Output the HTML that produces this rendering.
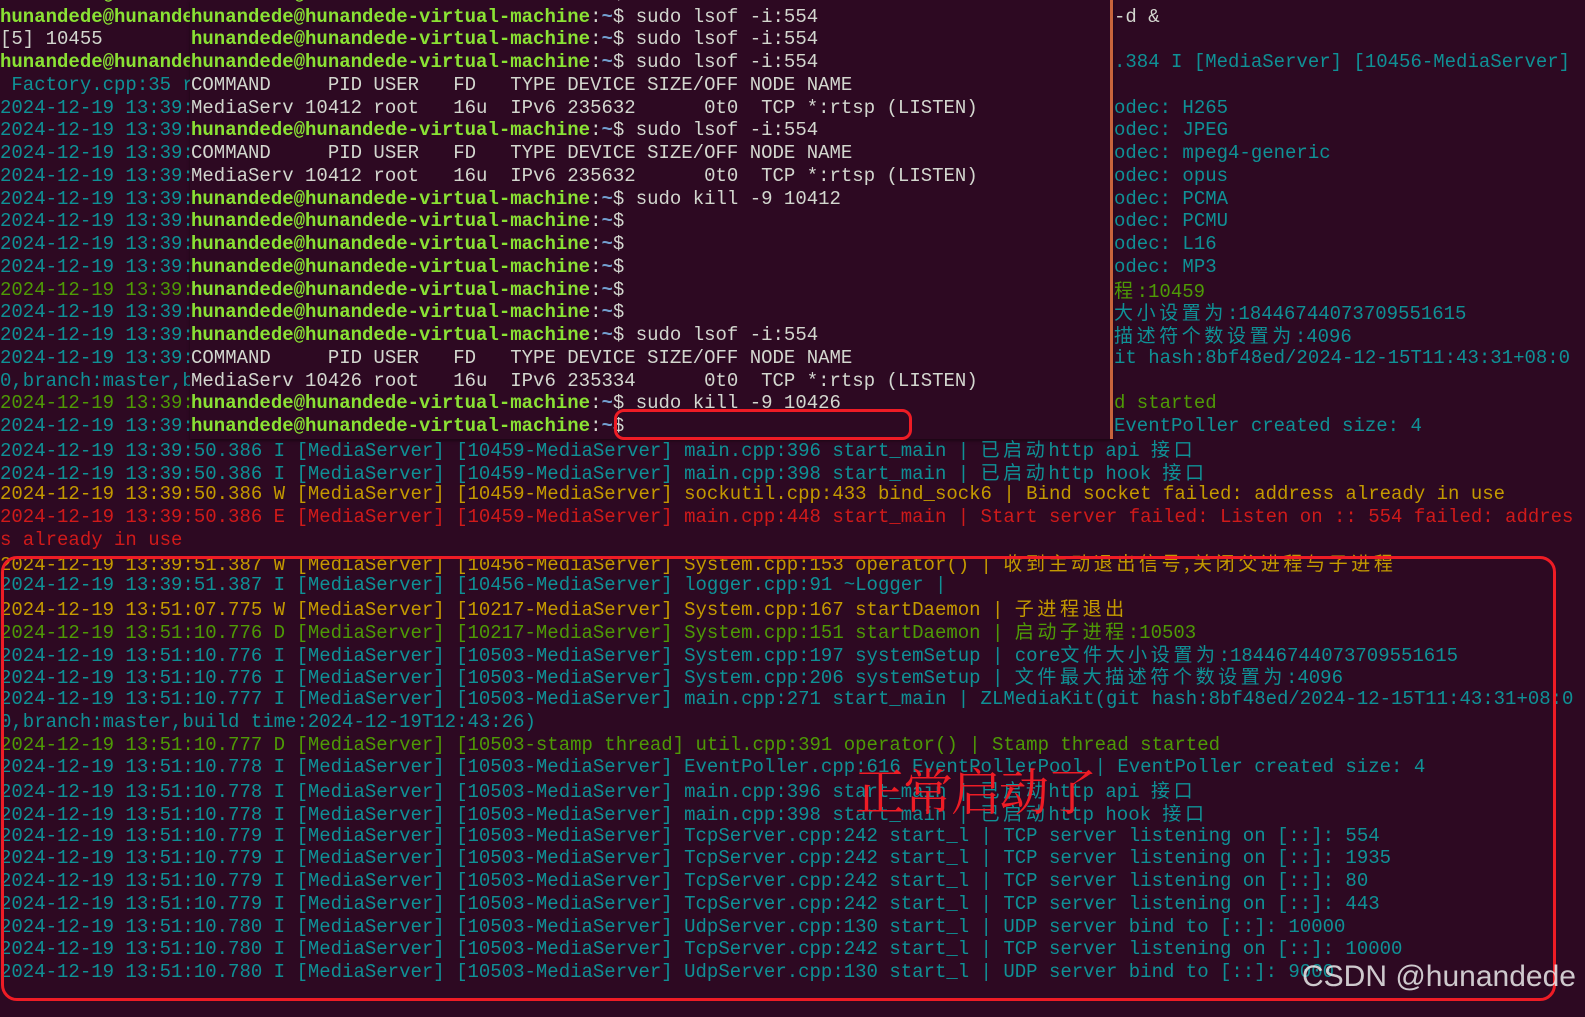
<!DOCTYPE html>
<html><head><meta charset="utf-8">
<style>
html,body{margin:0;padding:0;}
body{width:1585px;height:1017px;overflow:hidden;background:#2d0922;position:relative;font-family:"Liberation Mono","Noto Sans CJK SC",monospace;font-size:19px;}
.r{position:absolute;left:0;height:22.75px;line-height:22.75px;white-space:pre;}
.c{color:#0f9196}.g{color:#8ae234;font-weight:bold}.w{color:#d3d7cf}.y{color:#c49a00}.e{color:#d01a1a}.o{color:#4e9a06}.b{color:#729fcf;font-weight:bold}
.k{letter-spacing:3.6px;font-family:"Noto Sans CJK SC",sans-serif}
#ov{position:absolute;left:190px;top:0;width:920px;height:439px;background:#2d0922;border-right:3px solid #c8643c;box-shadow:0 2px 3px rgba(0,0,0,.4);overflow:hidden}
#ov .r{left:1px}
</style></head><body>
<div class="r g" style="top:-17px">hunandede@hunande</div>
<div class="r g" style="top:5.6px">hunandede@hunande</div>
<div class="r w" style="top:28.35px">[5] 10455</div>
<div class="r g" style="top:51.1px">hunandede@hunande</div>
<div class="r c" style="top:73.85px"> Factory.cpp:35 r</div>
<div class="r c" style="top:96.6px">2024-12-19 13:39:</div>
<div class="r c" style="top:119.35px">2024-12-19 13:39:</div>
<div class="r c" style="top:142.1px">2024-12-19 13:39:</div>
<div class="r c" style="top:164.85px">2024-12-19 13:39:</div>
<div class="r c" style="top:187.6px">2024-12-19 13:39:</div>
<div class="r c" style="top:210.35px">2024-12-19 13:39:</div>
<div class="r c" style="top:233.1px">2024-12-19 13:39:</div>
<div class="r c" style="top:255.85px">2024-12-19 13:39:</div>
<div class="r o" style="top:278.6px">2024-12-19 13:39:</div>
<div class="r c" style="top:301.35px">2024-12-19 13:39:</div>
<div class="r c" style="top:324.1px">2024-12-19 13:39:</div>
<div class="r c" style="top:346.85px">2024-12-19 13:39:</div>
<div class="r c" style="top:369.6px">0,branch:master,b</div>
<div class="r o" style="top:392.35px">2024-12-19 13:39:</div>
<div class="r c" style="top:415.1px">2024-12-19 13:39:</div>
<div class="r w" style="top:5.6px;left:1114px">-d &amp;</div>
<div class="r c" style="top:51.1px;left:1114px">.384 I [MediaServer] [10456-MediaServer]</div>
<div class="r c" style="top:96.6px;left:1114px">odec: H265</div>
<div class="r c" style="top:119.35px;left:1114px">odec: JPEG</div>
<div class="r c" style="top:142.1px;left:1114px">odec: mpeg4-generic</div>
<div class="r c" style="top:164.85px;left:1114px">odec: opus</div>
<div class="r c" style="top:187.6px;left:1114px">odec: PCMA</div>
<div class="r c" style="top:210.35px;left:1114px">odec: PCMU</div>
<div class="r c" style="top:233.1px;left:1114px">odec: L16</div>
<div class="r c" style="top:255.85px;left:1114px">odec: MP3</div>
<div class="r o" style="top:278.6px;left:1114px"><span class="k">程</span>:10459</div>
<div class="r c" style="top:301.35px;left:1114px"><span class="k">大小设置为</span>:18446744073709551615</div>
<div class="r c" style="top:324.1px;left:1114px"><span class="k">描述符个数设置为</span>:4096</div>
<div class="r c" style="top:346.85px;left:1114px">it hash:8bf48ed/2024-12-15T11:43:31+08:0</div>
<div class="r o" style="top:392.35px;left:1114px">d started</div>
<div class="r c" style="top:415.1px;left:1114px">EventPoller created size: 4</div>

<div id="ov">
<div class="r" style="top:-17px"><span class="g">hunandede@hunandede-virtual-machine</span><span class="w">:</span><span class="b">~</span><span class="w">$ sudo kill -9 10376</span></div>
<div class="r" style="top:5.6px"><span class="g">hunandede@hunandede-virtual-machine</span><span class="w">:</span><span class="b">~</span><span class="w">$ sudo lsof -i:554</span></div>
<div class="r" style="top:28.35px"><span class="g">hunandede@hunandede-virtual-machine</span><span class="w">:</span><span class="b">~</span><span class="w">$ sudo lsof -i:554</span></div>
<div class="r" style="top:51.1px"><span class="g">hunandede@hunandede-virtual-machine</span><span class="w">:</span><span class="b">~</span><span class="w">$ sudo lsof -i:554</span></div>
<div class="r w" style="top:73.85px">COMMAND     PID USER   FD   TYPE DEVICE SIZE/OFF NODE NAME</div>
<div class="r w" style="top:96.6px">MediaServ 10412 root   16u  IPv6 235632      0t0  TCP *:rtsp (LISTEN)</div>
<div class="r" style="top:119.35px"><span class="g">hunandede@hunandede-virtual-machine</span><span class="w">:</span><span class="b">~</span><span class="w">$ sudo lsof -i:554</span></div>
<div class="r w" style="top:142.1px">COMMAND     PID USER   FD   TYPE DEVICE SIZE/OFF NODE NAME</div>
<div class="r w" style="top:164.85px">MediaServ 10412 root   16u  IPv6 235632      0t0  TCP *:rtsp (LISTEN)</div>
<div class="r" style="top:187.6px"><span class="g">hunandede@hunandede-virtual-machine</span><span class="w">:</span><span class="b">~</span><span class="w">$ sudo kill -9 10412</span></div>
<div class="r" style="top:210.35px"><span class="g">hunandede@hunandede-virtual-machine</span><span class="w">:</span><span class="b">~</span><span class="w">$</span></div>
<div class="r" style="top:233.1px"><span class="g">hunandede@hunandede-virtual-machine</span><span class="w">:</span><span class="b">~</span><span class="w">$</span></div>
<div class="r" style="top:255.85px"><span class="g">hunandede@hunandede-virtual-machine</span><span class="w">:</span><span class="b">~</span><span class="w">$</span></div>
<div class="r" style="top:278.6px"><span class="g">hunandede@hunandede-virtual-machine</span><span class="w">:</span><span class="b">~</span><span class="w">$</span></div>
<div class="r" style="top:301.35px"><span class="g">hunandede@hunandede-virtual-machine</span><span class="w">:</span><span class="b">~</span><span class="w">$</span></div>
<div class="r" style="top:324.1px"><span class="g">hunandede@hunandede-virtual-machine</span><span class="w">:</span><span class="b">~</span><span class="w">$ sudo lsof -i:554</span></div>
<div class="r w" style="top:346.85px">COMMAND     PID USER   FD   TYPE DEVICE SIZE/OFF NODE NAME</div>
<div class="r w" style="top:369.6px">MediaServ 10426 root   16u  IPv6 235334      0t0  TCP *:rtsp (LISTEN)</div>
<div class="r" style="top:392.35px"><span class="g">hunandede@hunandede-virtual-machine</span><span class="w">:</span><span class="b">~</span><span class="w">$ sudo kill -9 10426</span></div>
<div class="r" style="top:415.1px"><span class="g">hunandede@hunandede-virtual-machine</span><span class="w">:</span><span class="b">~</span><span class="w">$</span></div>
</div>

<div class="r c" style="top:437.85px">2024-12-19 13:39:50.386 I [MediaServer] [10459-MediaServer] main.cpp:396 start_main | <span class="k">已启动</span>http api <span class="k">接口</span></div>
<div class="r c" style="top:460.6px">2024-12-19 13:39:50.386 I [MediaServer] [10459-MediaServer] main.cpp:398 start_main | <span class="k">已启动</span>http hook <span class="k">接口</span></div>
<div class="r y" style="top:483.35px">2024-12-19 13:39:50.386 W [MediaServer] [10459-MediaServer] sockutil.cpp:433 bind_sock6 | Bind socket failed: address already in use</div>
<div class="r e" style="top:506.1px">2024-12-19 13:39:50.386 E [MediaServer] [10459-MediaServer] main.cpp:448 start_main | Start server failed: Listen on :: 554 failed: addres</div>
<div class="r e" style="top:528.85px">s already in use</div>
<div class="r y" style="top:551.6px">2024-12-19 13:39:51.387 W [MediaServer] [10456-MediaServer] System.cpp:153 operator() | <span class="k">收到主动退出信号,关闭父进程与子进程</span></div>
<div class="r c" style="top:574.35px">2024-12-19 13:39:51.387 I [MediaServer] [10456-MediaServer] logger.cpp:91 ~Logger |</div>
<div class="r y" style="top:597.1px">2024-12-19 13:51:07.775 W [MediaServer] [10217-MediaServer] System.cpp:167 startDaemon | <span class="k">子进程退出</span></div>
<div class="r o" style="top:619.85px">2024-12-19 13:51:10.776 D [MediaServer] [10217-MediaServer] System.cpp:151 startDaemon | <span class="k">启动子进程</span>:10503</div>
<div class="r c" style="top:642.6px">2024-12-19 13:51:10.776 I [MediaServer] [10503-MediaServer] System.cpp:197 systemSetup | core<span class="k">文件大小设置为</span>:18446744073709551615</div>
<div class="r c" style="top:665.35px">2024-12-19 13:51:10.776 I [MediaServer] [10503-MediaServer] System.cpp:206 systemSetup | <span class="k">文件最大描述符个数设置为</span>:4096</div>
<div class="r c" style="top:688.1px">2024-12-19 13:51:10.777 I [MediaServer] [10503-MediaServer] main.cpp:271 start_main | ZLMediaKit(git hash:8bf48ed/2024-12-15T11:43:31+08:0</div>
<div class="r c" style="top:710.85px">0,branch:master,build time:2024-12-19T12:43:26)</div>
<div class="r o" style="top:733.6px">2024-12-19 13:51:10.777 D [MediaServer] [10503-stamp thread] util.cpp:391 operator() | Stamp thread started</div>
<div class="r c" style="top:756.35px">2024-12-19 13:51:10.778 I [MediaServer] [10503-MediaServer] EventPoller.cpp:616 EventPollerPool | EventPoller created size: 4</div>
<div class="r c" style="top:779.1px">2024-12-19 13:51:10.778 I [MediaServer] [10503-MediaServer] main.cpp:396 start_main | <span class="k">已启动</span>http api <span class="k">接口</span></div>
<div class="r c" style="top:801.85px">2024-12-19 13:51:10.778 I [MediaServer] [10503-MediaServer] main.cpp:398 start_main | <span class="k">已启动</span>http hook <span class="k">接口</span></div>
<div class="r c" style="top:824.6px">2024-12-19 13:51:10.779 I [MediaServer] [10503-MediaServer] TcpServer.cpp:242 start_l | TCP server listening on [::]: 554</div>
<div class="r c" style="top:847.35px">2024-12-19 13:51:10.779 I [MediaServer] [10503-MediaServer] TcpServer.cpp:242 start_l | TCP server listening on [::]: 1935</div>
<div class="r c" style="top:870.1px">2024-12-19 13:51:10.779 I [MediaServer] [10503-MediaServer] TcpServer.cpp:242 start_l | TCP server listening on [::]: 80</div>
<div class="r c" style="top:892.85px">2024-12-19 13:51:10.779 I [MediaServer] [10503-MediaServer] TcpServer.cpp:242 start_l | TCP server listening on [::]: 443</div>
<div class="r c" style="top:915.6px">2024-12-19 13:51:10.780 I [MediaServer] [10503-MediaServer] UdpServer.cpp:130 start_l | UDP server bind to [::]: 10000</div>
<div class="r c" style="top:938.35px">2024-12-19 13:51:10.780 I [MediaServer] [10503-MediaServer] TcpServer.cpp:242 start_l | TCP server listening on [::]: 10000</div>
<div class="r c" style="top:961.1px">2024-12-19 13:51:10.780 I [MediaServer] [10503-MediaServer] UdpServer.cpp:130 start_l | UDP server bind to [::]: 9000</div>

<div style="position:absolute;left:614px;top:409px;width:292px;height:25px;border:3px solid #ee1c25;border-radius:10px"></div>
<div style="position:absolute;left:1px;top:556px;width:1549px;height:439px;border:3px solid #ee1c25;border-radius:16px"></div>
<div style="position:absolute;left:855px;top:760px;font-family:'Noto Serif CJK SC',serif;font-size:50px;line-height:58px;color:#ee1c25;letter-spacing:-2px">正常启动了</div>
<div style="position:absolute;left:1302px;top:958px;font-family:'Liberation Sans',sans-serif;font-size:30px;line-height:38px;color:rgba(235,235,235,.85)">CSDN @hunandede</div>
</body></html>
